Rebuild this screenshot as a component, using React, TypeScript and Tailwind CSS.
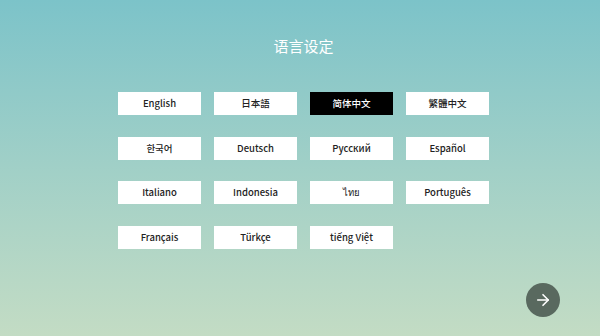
import { ArrowRight } from 'lucide-react'

const languages = [
  'English',
  '日本語',
  '简体中文',
  '繁體中文',
  '한국어',
  'Deutsch',
  'Русский',
  'Español',
  'Italiano',
  'Indonesia',
  'ไทย',
  'Português',
  'Français',
  'Türkçe',
  'tiếng Việt',
]

const selected = '简体中文'

export default function App() {
  return (
    <div
      className="relative h-[336px] w-[600px] overflow-hidden bg-gradient-to-b from-[#7cc3c9] to-[#c3dcc4]"
      style={{ fontFamily: '"Noto Sans CJK SC", "Noto Sans CJK KR", "Noto Sans", sans-serif' }}
    >
      <div className="flex flex-col pt-[36px]">
        <div className="ml-[118px] w-[371px] text-center text-[15px] leading-[20px] text-white">
          语言设定
        </div>
        <div className="ml-[118px] mt-[36px] grid grid-cols-[repeat(4,83px)] gap-x-[13px] gap-y-[21.5px]">
          {languages.map((lang) => (
            <button
              key={lang}
              className={
                lang === selected
                  ? 'flex h-[23px] items-center justify-center bg-black text-[9.5px] font-medium text-white'
                  : 'flex h-[23px] items-center justify-center bg-white text-[9.5px] font-medium text-[#222]'
              }
            >
              {lang}
            </button>
          ))}
        </div>
      </div>
      <button className="absolute bottom-[19px] right-[40px] flex h-[34px] w-[34px] items-center justify-center rounded-full bg-[#59695f]">
        <ArrowRight className="h-[18px] w-[18px] text-white" strokeWidth={2.2} />
      </button>
    </div>
  )
}
